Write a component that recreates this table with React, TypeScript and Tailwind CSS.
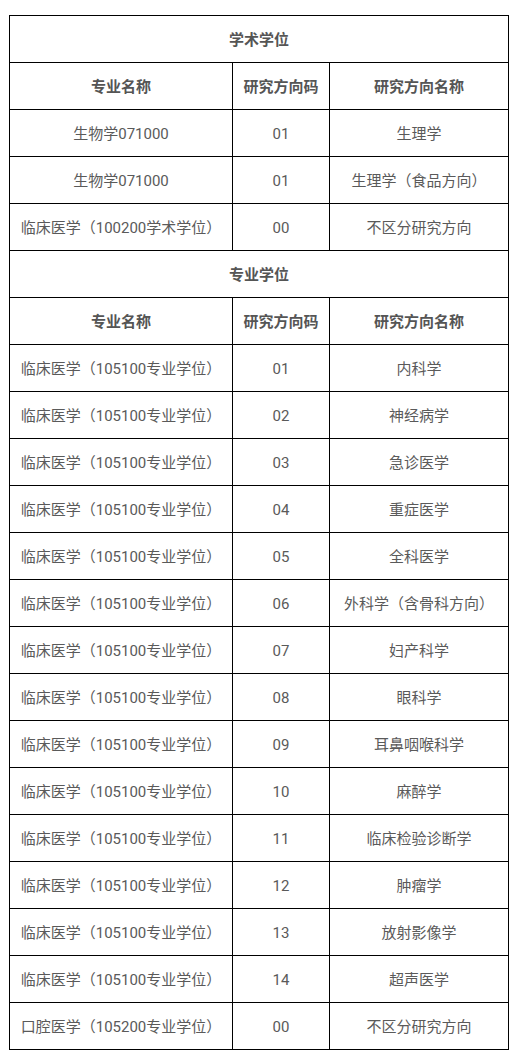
import React from 'react';

const zhuanye = '临床医学（105100专业学位）';

const academic = [
    { name: '生物学071000', code: '01', dir: '生理学' },
    { name: '生物学071000', code: '01', dir: '生理学（食品方向）' },
    { name: '临床医学（100200学术学位）', code: '00', dir: '不区分研究方向' }
];

const professional = [
    { name: zhuanye, code: '01', dir: '内科学' },
    { name: zhuanye, code: '02', dir: '神经病学' },
    { name: zhuanye, code: '03', dir: '急诊医学' },
    { name: zhuanye, code: '04', dir: '重症医学' },
    { name: zhuanye, code: '05', dir: '全科医学' },
    { name: zhuanye, code: '06', dir: '外科学（含骨科方向）' },
    { name: zhuanye, code: '07', dir: '妇产科学' },
    { name: zhuanye, code: '08', dir: '眼科学' },
    { name: zhuanye, code: '09', dir: '耳鼻咽喉科学' },
    { name: zhuanye, code: '10', dir: '麻醉学' },
    { name: zhuanye, code: '11', dir: '临床检验诊断学' },
    { name: zhuanye, code: '12', dir: '肿瘤学' },
    { name: zhuanye, code: '13', dir: '放射影像学' },
    { name: zhuanye, code: '14', dir: '超声医学' },
    { name: '口腔医学（105200专业学位）', code: '00', dir: '不区分研究方向' }
];

const cell = 'border border-black text-center align-middle px-0 pt-[2px] pb-0 whitespace-nowrap';

const Section = ({ title, rows }: { title: string; rows: typeof academic }) => (
    <>
        <tr className="h-[47px]">
            <td colSpan={3} className={`${cell} font-bold text-[#555]`}>{title}</td>
        </tr>
        <tr className="h-[47px]">
            <td className={`${cell} font-bold text-[#555]`}>专业名称</td>
            <td className={`${cell} font-bold text-[#555]`}>研究方向码</td>
            <td className={`${cell} font-bold text-[#555]`}>研究方向名称</td>
        </tr>
        {rows.map((r, i) => (
            <tr key={i} className="h-[47px]">
                <td className={cell}>{r.name}</td>
                <td className={cell}>{r.code}</td>
                <td className={cell}>{r.dir}</td>
            </tr>
        ))}
    </>
);

export default function App() {
    return (
        <div className="min-h-[1064px] bg-white pt-[15px] pl-[9px] font-['Roboto','Noto_Sans_CJK_SC',sans-serif] text-[15px] text-[#5a5a5a]">
            <table className="table-fixed border-collapse w-[499px]">
                <colgroup>
                    <col className="w-[223px]" />
                    <col className="w-[97px]" />
                    <col className="w-[179px]" />
                </colgroup>
                <tbody>
                    <Section title="学术学位" rows={academic} />
                    <Section title="专业学位" rows={professional} />
                </tbody>
            </table>
        </div>
    );
}
